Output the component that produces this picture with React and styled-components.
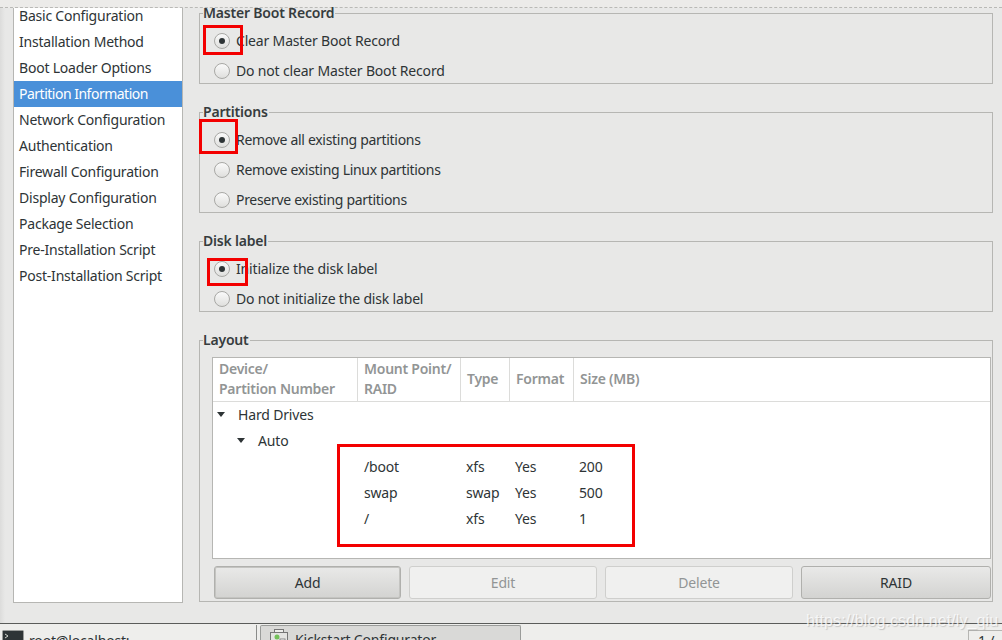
import styled, { createGlobalStyle } from 'styled-components'

const sections = [
  'Basic Configuration',
  'Installation Method',
  'Boot Loader Options',
  'Partition Information',
  'Network Configuration',
  'Authentication',
  'Firewall Configuration',
  'Display Configuration',
  'Package Selection',
  'Pre-Installation Script',
  'Post-Installation Script',
]

const partitions = [
  ['/boot', 'xfs', 'Yes', '200'],
  ['swap', 'swap', 'Yes', '500'],
  ['/', 'xfs', 'Yes', '1'],
]

const GlobalStyle = createGlobalStyle`
  html, body {
    margin: 0;
    padding: 0;
    overflow: hidden;
  }
  body {
    font-family: "Noto Sans", "Open Sans", sans-serif;
    font-size: 14px;
    letter-spacing: -0.17px;
    color: #2e3436;
    background: #e8e8e7;
  }
`

const Screen = styled.div`
  position: relative;
  width: 1002px;
  height: 640px;
  overflow: hidden;
  display: flex;
  flex-direction: column;
`

const TopEdge = styled.div`
  height: 8px;
  flex: none;
  box-sizing: border-box;
  background: #ecebe9;
  border-bottom: 1px dashed #b9b9b6;
`

const Main = styled.div`
  flex: none;
  height: 615px;
  display: flex;
  box-sizing: border-box;
  padding-left: 13px;
  background: linear-gradient(90deg, #dcdcdb 0, #e8e8e7 5px);
`

const Sidebar = styled.ul`
  list-style: none;
  margin: 0;
  padding: 0;
  width: 170px;
  height: 595px;
  box-sizing: border-box;
  overflow: hidden;
  background: #fff;
  border: 1px solid #b6b6b3;
  border-top: none;
`

const SidebarItem = styled.li`
  height: 26px;
  line-height: 26px;
  padding-left: 5px;
  white-space: nowrap;
  letter-spacing: ${(p) => (p.$active ? '-0.5px' : '-0.22px')};
  color: ${(p) => (p.$active ? '#fff' : '#2e3436')};
  background: ${(p) => (p.$active ? '#4a90d9' : 'transparent')};
  &:first-child {
    margin-top: -5px;
  }
`

const Content = styled.div`
  width: 794px;
  margin-top: -5px;
  margin-left: 16px;
  display: flex;
  flex-direction: column;
  gap: 18px;
`

const Group = styled.fieldset`
  margin: 0;
  padding: 6px 0 0;
  border: 1px solid #b6b6b3;
  min-width: 0;
  display: flex;
  flex-direction: column;
  gap: 6px;
`

const GroupTitle = styled.legend`
  margin-left: 3px;
  padding: 0 1px 0 0;
  line-height: 20px;
  font-weight: 600;
  letter-spacing: -0.2px;
  color: #363c3e;
`

const RadioRow = styled.label`
  position: relative;
  height: 24px;
  display: flex;
  align-items: center;
  gap: 6px;
  padding-left: 14px;
`

const RadioText = styled.span`
  margin-bottom: 2px;
  letter-spacing: ${(p) => (p.$tight ? '-0.3px' : 'inherit')};
`

const RadioMark = styled.span`
  width: 16px;
  height: 16px;
  flex: none;
  box-sizing: border-box;
  border-radius: 50%;
  border: 1px solid #a8a8a5;
  background: linear-gradient(#fafafa, #dfdfdd);
  display: flex;
  align-items: center;
  justify-content: center;
  &::after {
    content: '';
    width: 6px;
    height: 6px;
    border-radius: 50%;
    background: ${(p) => (p.$checked ? '#2e3436' : 'transparent')};
  }
`

const RedBox = styled.span`
  position: absolute;
  box-sizing: border-box;
  border: 3px solid #f30000;
  left: ${(p) => p.$left}px;
  top: ${(p) => p.$top}px;
  width: ${(p) => p.$width}px;
  height: ${(p) => p.$height}px;
`

const LayoutBody = styled.div`
  display: flex;
  flex-direction: column;
  gap: 7px;
  padding: 1px 1px 2px 12px;
`

const TreeTable = styled.div`
  position: relative;
  height: 202px;
  box-sizing: border-box;
  background: #fff;
  border: 1px solid #b6b6b3;
`

const columns = '145px 103px 49px 64px 1fr'

const HeaderRow = styled.div`
  height: 44px;
  box-sizing: border-box;
  display: grid;
  grid-template-columns: ${columns};
  border-bottom: 1px solid #dcdcda;
`

const HeaderCell = styled.div`
  display: flex;
  align-items: center;
  padding: 0 0 2px 6px;
  line-height: 20px;
  font-weight: 600;
  letter-spacing: -0.25px;
  color: #929595;
  border-right: ${(p) => (p.$last ? 'none' : '1px solid #dcdcda')};
`

const TreeRow = styled.div`
  height: 26px;
  box-sizing: border-box;
  display: flex;
  align-items: center;
  gap: 13px;
  padding: 0 0 2px ${(p) => p.$indent}px;
`

const Arrow = styled.span`
  width: 0;
  height: 0;
  border-left: 4.5px solid transparent;
  border-right: 4.5px solid transparent;
  border-top: 5px solid #2e3436;
`

const DataRow = styled.div`
  height: 26px;
  box-sizing: border-box;
  padding-bottom: 2px;
  display: grid;
  grid-template-columns: ${columns};
  align-items: center;
`

const DataCell = styled.div`
  padding-left: 5px;
  &:nth-child(2) {
    padding-left: 6px;
  }
`

const ButtonRow = styled.div`
  display: grid;
  grid-template-columns: 187px 188px 188px 190px;
  gap: 8px;
  padding-left: 2px;
`

const Button = styled.button`
  height: 33px;
  padding: 0;
  font: inherit;
  letter-spacing: inherit;
  border-radius: 3px;
  color: ${(p) => (p.disabled ? '#929595' : '#2e3436')};
  border: 1px solid ${(p) => (p.disabled ? '#cfcfcd' : '#b0b0ad')};
  background: ${(p) =>
    p.disabled ? '#f0f0ef' : 'linear-gradient(#e9e9e8, #d3d3d1)'};
  box-shadow: ${(p) => (p.$focused ? 'inset 0 0 0 1px #c4c4c1' : 'none')};
`

const Taskbar = styled.div`
  flex: 1;
  display: flex;
  box-sizing: border-box;
  background: #eeeeec;
  border-top: 1px solid #5a5c5a;
`

const TaskItem = styled.div`
  display: flex;
  gap: 5px;
  white-space: nowrap;
  padding-left: 2px;
  width: 254px;
  box-sizing: border-box;
  padding-top: 6px;
`

const TaskLabel = styled.span`
  padding-top: 1px;
  white-space: nowrap;
`

const TaskDivider = styled.div`
  width: 1px;
  margin-top: 1px;
  margin-left: 2px;
  background: #8a8c8a;
`

const TaskWindow = styled.div`
  margin-left: 3px;
  margin-top: 1px;
  width: 261px;
  box-sizing: border-box;
  display: flex;
  gap: 6px;
  padding: 3px 0 0 8px;
  border: 1px solid #9a9c9a;
  border-bottom: none;
  border-radius: 2px 2px 0 0;
  background: #d9d9d7;
`

const Pager = styled.div`
  margin-left: auto;
  margin-top: 6px;
  width: 34px;
  box-sizing: border-box;
  padding-left: 9px;
  border: 1px solid #b6b6b3;
  border-right: none;
  border-bottom: none;
`

const Watermark = styled.div`
  position: absolute;
  left: 806px;
  top: 612px;
  font-family: "Liberation Sans", sans-serif;
  font-size: 16px;
  letter-spacing: 0.1px;
  line-height: 18px;
  white-space: nowrap;
  color: rgba(255, 255, 255, 0.75);
  text-shadow: 1px 1px 1px rgba(120, 120, 120, 0.35);
`

const TerminalIcon = () => (
  <svg width="22" height="22" viewBox="0 0 22 22">
    <rect x="0.5" y="0.5" width="21" height="21" rx="1" fill="#2e3436" stroke="#9a9c9a" />
    <path d="M3 4l3 2-3 2" fill="none" stroke="#d3d7cf" strokeWidth="1" />
  </svg>
)

const KickstartIcon = () => (
  <svg width="20" height="20" viewBox="0 0 20 20">
    <rect x="5.5" y="0.5" width="9" height="5" fill="#eeeeec" stroke="#777" />
    <rect x="1.5" y="3.5" width="17" height="15" fill="#e4e4e2" stroke="#777" />
    <circle cx="8" cy="8" r="2.5" fill="#73c05a" />
    <rect x="11" y="10" width="5" height="5" fill="#fff" stroke="#888" />
  </svg>
)

function App() {
  return (
    <Screen>
      <GlobalStyle />
      <TopEdge />
      <Main>
        <Sidebar>
          {sections.map((name) => (
            <SidebarItem key={name} $active={name === 'Partition Information'}>
              {name}
            </SidebarItem>
          ))}
        </Sidebar>
        <Content>
          <Group>
            <GroupTitle>Master Boot Record</GroupTitle>
            <RadioRow>
              <RadioMark $checked />
              <RadioText>Clear Master Boot Record</RadioText>
              <RedBox $left={3} $top={-4} $width={40} $height={30} />
            </RadioRow>
            <RadioRow>
              <RadioMark />
              <RadioText>Do not clear Master Boot Record</RadioText>
            </RadioRow>
          </Group>
          <Group>
            <GroupTitle>Partitions</GroupTitle>
            <RadioRow>
              <RadioMark $checked />
              <RadioText $tight>Remove all existing partitions</RadioText>
              <RedBox $left={-1} $top={-9} $width={39} $height={35} />
            </RadioRow>
            <RadioRow>
              <RadioMark />
              <RadioText $tight>Remove existing Linux partitions</RadioText>
            </RadioRow>
            <RadioRow>
              <RadioMark />
              <RadioText $tight>Preserve existing partitions</RadioText>
            </RadioRow>
          </Group>
          <Group>
            <GroupTitle>Disk label</GroupTitle>
            <RadioRow>
              <RadioMark $checked />
              <RadioText>Initialize the disk label</RadioText>
              <RedBox $left={7} $top={1} $width={41} $height={28} />
            </RadioRow>
            <RadioRow>
              <RadioMark />
              <RadioText>Do not initialize the disk label</RadioText>
            </RadioRow>
          </Group>
          <Group>
            <GroupTitle>Layout</GroupTitle>
            <LayoutBody>
              <TreeTable>
                <HeaderRow>
                  <HeaderCell>Device/<br />Partition Number</HeaderCell>
                  <HeaderCell>Mount Point/<br />RAID</HeaderCell>
                  <HeaderCell>Type</HeaderCell>
                  <HeaderCell>Format</HeaderCell>
                  <HeaderCell $last>Size (MB)</HeaderCell>
                </HeaderRow>
                <TreeRow $indent={4}>
                  <Arrow />
                  Hard Drives
                </TreeRow>
                <TreeRow $indent={24}>
                  <Arrow />
                  Auto
                </TreeRow>
                {partitions.map((row) => (
                  <DataRow key={row[0]}>
                    <span />
                    {row.map((value, i) => (
                      <DataCell key={i}>{value}</DataCell>
                    ))}
                  </DataRow>
                ))}
                <RedBox $left={124} $top={86} $width={298} $height={103} />
              </TreeTable>
              <ButtonRow>
                <Button $focused>Add</Button>
                <Button disabled>Edit</Button>
                <Button disabled>Delete</Button>
                <Button>RAID</Button>
              </ButtonRow>
            </LayoutBody>
          </Group>
        </Content>
      </Main>
      <Taskbar>
        <TaskItem>
          <TerminalIcon />
          <TaskLabel>root@localhost:</TaskLabel>
        </TaskItem>
        <TaskDivider />
        <TaskWindow>
          <KickstartIcon />
          <TaskLabel>Kickstart Configurator</TaskLabel>
        </TaskWindow>
        <Pager>1 / 4</Pager>
      </Taskbar>
      <Watermark>https://blog.csdn.net/ly_qiu</Watermark>
    </Screen>
  )
}

export default App
